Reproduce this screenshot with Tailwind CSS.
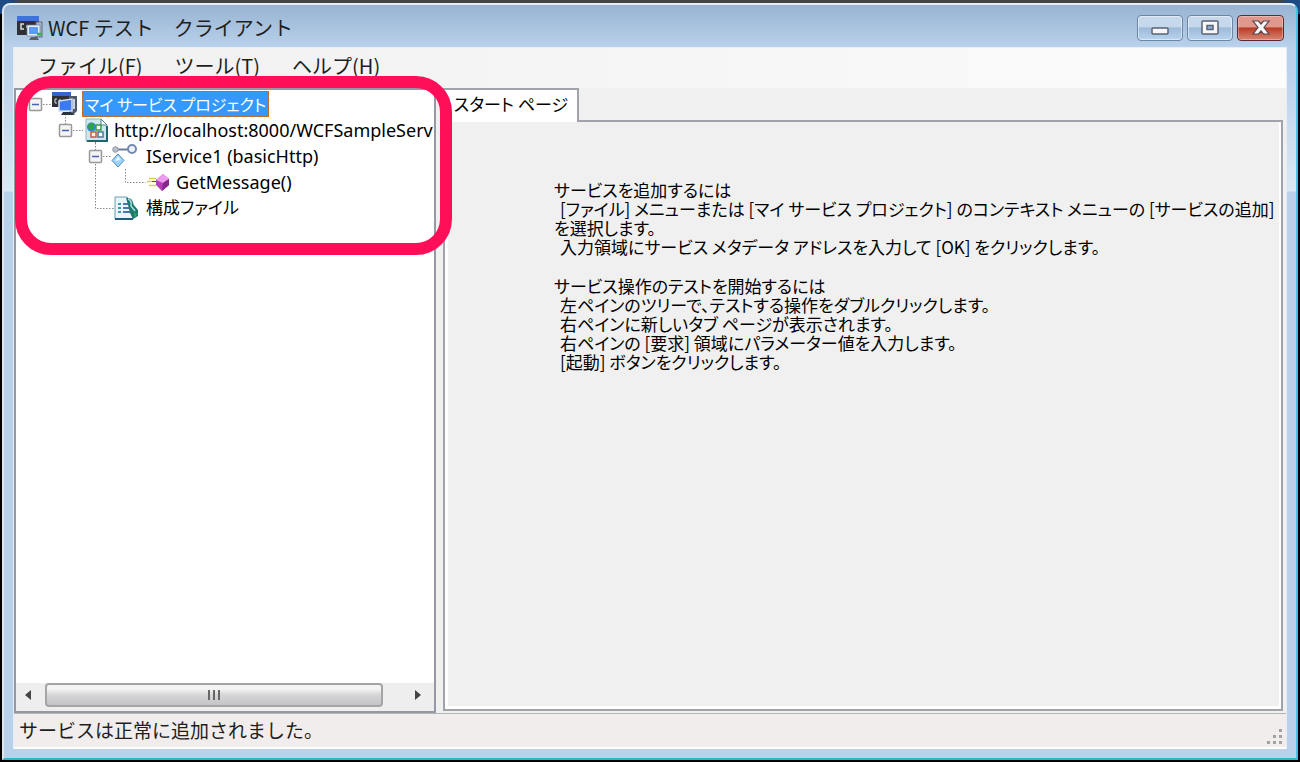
<!DOCTYPE html>
<html lang="ja">
<head>
    <meta charset="UTF-8">
    <meta name="viewport" content="width=device-width, initial-scale=1.0">
    <title>WCF テスト クライアント</title>
    <script src="https://cdn.jsdelivr.net/npm/@tailwindcss/browser@4"></script>
</head>
<body class="relative h-screen overflow-hidden bg-black font-['Noto_Sans_CJK_JP',sans-serif] text-[20px] text-[#1e1e1e]">
    <!-- window frame -->
    <div class="h-full bg-[linear-gradient(to_bottom,transparent_14px,#000_14px),linear-gradient(to_right,#1c4a84_12px,#444_20px,#444_calc(100%-20px),#1c4a84_calc(100%-12px))] px-[2px] pt-[3px] pb-[2px]">
        <div class="flex h-full flex-col rounded-t-lg border-2 border-t-[#e8eef5] border-r-[#3fc4dc] border-b-[#2fb4cc] border-l-[#dfe6ee] bg-[linear-gradient(to_bottom,#b9d1ea_60px,#dbe7f4_186px,#b9d1ea_187px)] px-[9px] pb-[9px]">
            <!-- title bar -->
            <header class="-mx-[9px] flex h-[42px] shrink-0 items-center rounded-t-md bg-linear-to-b from-[#98b4d2] to-[#b9d1ea] px-3 pt-1">
                <svg class="mr-1 h-7 w-7" viewBox="0 0 28 28">
                    <rect x="1" y="2" width="22" height="19" fill="#2e3238"/>
                    <rect x="1" y="2" width="22" height="5" fill="#3f73d6"/>
                    <path d="M8 10H5v5h3M11 11v3" stroke="#ddd" stroke-width="1.5" fill="none"/>
                    <rect x="20" y="8" width="6" height="15" fill="#a9b7c8" stroke="#5c6a7c"/>
                    <rect x="12" y="12" width="11" height="9" fill="#5b9bf5" stroke="#e4ecf8" stroke-width="2"/>
                    <path d="M11 11h13v11H11z" fill="none" stroke="#6d7d96" stroke-width=".7"/>
                    <path d="M15 23h6l2 3H13z" fill="#556070"/>
                    <path d="M21 20h5" stroke="#35b04a" stroke-width="2.500"/>
                </svg>
                <h1 class="flex-1">WCF テスト　クライアント</h1>
                <div class="flex gap-1">
                    <button aria-label="最小化" class="flex h-[26px] w-[46px] items-center justify-center rounded border border-[#6c86a5] bg-linear-to-b from-[#c6d9ec] from-45% via-[#9dbad9] via-50% to-[#b8d3ee] inset-ring inset-ring-white/50">
                        <svg width="20" height="16" viewBox="0 0 20 16"><rect x="2" y="8" width="16" height="6" rx="1" fill="#f6f6f6" stroke="#596373" stroke-width="1.5"/></svg>
                    </button>
                    <button aria-label="最大化" class="flex h-[26px] w-[46px] items-center justify-center rounded border border-[#6c86a5] bg-linear-to-b from-[#c6d9ec] from-45% via-[#9dbad9] via-50% to-[#b8d3ee] inset-ring inset-ring-white/50">
                        <svg width="20" height="16" viewBox="0 0 20 16"><rect x="2" y="1" width="16" height="13" rx="1" fill="#f6f6f6" stroke="#596373" stroke-width="1.5"/><rect x="7" y="5.500" width="6" height="4" fill="#8fb0d6" stroke="#596373" stroke-width="1.5"/></svg>
                    </button>
                    <button aria-label="閉じる" class="flex h-[26px] w-[47px] items-center justify-center rounded border border-[#5d2a34] bg-linear-to-b from-[#e0988c] from-45% via-[#b83a24] via-50% to-[#d98570] inset-ring inset-ring-white/30">
                        <svg width="20" height="16" viewBox="0 0 20 16"><path d="M2 1h5.500l2.500 3 2.500-3H18l-5 6.500 5 6.500h-5.500L10 11l-2.500 3H2l5-6.500z" fill="#f6f6f6" stroke="#59464c" stroke-width="1.2"/></svg>
                    </button>
                </div>
            </header>
            <!-- client area -->
            <main class="flex min-h-0 flex-1 flex-col border-x border-t border-[#e6eef8] bg-[#f0f0f0]">
                <nav class="flex h-10 shrink-0 items-center gap-8 bg-linear-to-r from-[#f0f0f0] to-[#fcfcfc] pb-1 pl-6">
                    <button>ファイル(F)</button>
                    <button>ツール(T)</button>
                    <button>ヘルプ(H)</button>
                </nav>
                <div class="flex min-h-0 flex-1 gap-[7px]">
                    <!-- service tree -->
                    <section class="flex w-[422px] shrink-0 flex-col border-2 border-[#9699a3] bg-white">
                        <ul class="min-h-0 flex-1 overflow-hidden pt-px font-['Noto_Sans','Noto_Sans_CJK_JP',sans-serif] text-[18px] leading-[26px] whitespace-nowrap text-black">
                            <li class="flex h-[26px] items-center">
                                <svg class="h-[26px] w-[66px] shrink-0" viewBox="0 0 66 26">
                                    <path d="M27 13.500h8M49.500 23v3" stroke="#888" stroke-dasharray="1.500 1.500"/>
                                    <rect x="13.500" y="7.500" width="12" height="12" rx="1" fill="#f4f4f4" stroke="#999" stroke-width="1.5"/>
                                    <path d="M16 13.500h7" stroke="#4a63b0" stroke-width="1.5"/>
                                    <rect x="36" y="1" width="19" height="15" fill="#2e3238"/>
                                    <rect x="36" y="1" width="19" height="4" fill="#2f66d0"/>
                                    <path d="M41 8h-2v4h2M44 8v3" stroke="#ddd" fill="none"/>
                                    <path d="M53 5h8v15l-3 3h-5z" fill="#4d5a6c"/>
                                    <path d="M58 8v10" stroke="#c5cfdd" stroke-width="2"/>
                                    <path d="M43 10l13-2v12H43z" fill="#3b7af0" stroke="#d5dff2" stroke-width="1.5"/>
                                    <path d="M47 21h7l5 3H45z" fill="#2c3440"/>
                                </svg>
                                <span class="border border-dotted border-[#c06a20] bg-[#3399ff] px-[2px] font-['Noto_Sans_CJK_JP',sans-serif] text-[16px] leading-6 text-white [font-feature-settings:'palt']">マイ サービス プロジェクト</span>
                            </li>
                            <li class="flex h-[26px] items-center">
                                <svg class="h-[26px] w-[98px] shrink-0" viewBox="0 0 98 26">
                                    <path d="M49.500 0v7M57 13.500h10M79.500 25v1" stroke="#888" stroke-dasharray="1.500 1.500"/>
                                    <rect x="43.500" y="7.500" width="12" height="12" rx="1" fill="#f4f4f4" stroke="#999" stroke-width="1.5"/>
                                    <path d="M46 13.500h7" stroke="#4a63b0" stroke-width="1.5"/>
                                    <path d="M70 2h15l6 6v16H70z" fill="#cfe6f0" stroke="#8fb8c2"/>
                                    <path d="M85 2v6h6z" fill="#fff" stroke="#5b7f8c"/>
                                    <path d="M91 9v15H71" stroke="#1f6570" stroke-width="2" fill="none"/>
                                    <circle cx="75.500" cy="10" r="4.500" fill="#2f86c8"/>
                                    <path d="M72 8q3-4 6-1l-1 5q-3 2-5-1z" fill="#35a04a"/>
                                    <rect x="80" y="8" width="5" height="5" fill="#f4fbf4" stroke="#3a9a4c" stroke-width="1.5"/>
                                    <rect x="75" y="15" width="5" height="5" fill="#fbf4f0" stroke="#c0603c" stroke-width="1.5"/>
                                    <rect x="82" y="15" width="5" height="5" fill="#fff" stroke="#4e7a94" stroke-width="1.5"/>
                                </svg>
                                <span>http://localhost:8000/WCFSampleServ</span>
                            </li>
                            <li class="flex h-[26px] items-center">
                                <svg class="h-[26px] w-[130px] shrink-0" viewBox="0 0 130 26">
                                    <path d="M79.500 0v7M79.500 21v5M87 13.500h9" stroke="#888" stroke-dasharray="1.500 1.500"/>
                                    <rect x="73.500" y="7.500" width="12" height="12" rx="1" fill="#f4f4f4" stroke="#999" stroke-width="1.5"/>
                                    <path d="M76 13.500h7" stroke="#4a63b0" stroke-width="1.5"/>
                                    <path d="M101 6.500h11" stroke="#6b7c9c" stroke-width="2"/>
                                    <circle cx="99.500" cy="6.500" r="2.800" fill="#b9bec8" stroke="#8f97a6"/>
                                    <circle cx="116" cy="6" r="4" fill="#eef2fa" stroke="#7288ae" stroke-width="2"/>
                                    <path d="M102 11l6 6.500-6 6.500-6-6.500z" fill="#9fd2f8" stroke="#4a8ccc"/>
                                    <path d="M102 13l3 4-6 1z" fill="#e4f5ff"/>
                                </svg>
                                <span>IService1 (basicHttp)</span>
                            </li>
                            <li class="flex h-[26px] items-center">
                                <svg class="h-[26px] w-[160px] shrink-0" viewBox="0 0 160 26">
                                    <path d="M79.500 0v26M109.500 0v13.500h20" stroke="#888" stroke-dasharray="1.500 1.500" fill="none"/>
                                    <path d="M133 9.500h7M131 12.500h8M133 16.500h7" stroke="#d8cc60" stroke-width="1.5"/>
                                    <path d="M136 12.500h4" stroke="#555"/>
                                    <path d="M147 5l6 5v6l-7 6-6-6v-5z" fill="#b63cb8"/>
                                    <path d="M147 5l6 5-6 4-7-3z" fill="#ee9cf0"/>
                                    <path d="M153 10v6l-7 6 1-8z" fill="#85268c"/>
                                </svg>
                                <span>GetMessage()</span>
                            </li>
                            <li class="flex h-[26px] items-center">
                                <svg class="h-[26px] w-[130px] shrink-0" viewBox="0 0 130 26">
                                    <path d="M79.500 0v13.500h18" stroke="#888" stroke-dasharray="1.500 1.500" fill="none"/>
                                    <path d="M99 2h12l6 6v16H99z" fill="#eaf4fa" stroke="#6d9cae"/>
                                    <path d="M99 24h18" stroke="#1d5e7c" stroke-width="2"/>
                                    <path d="M102 9h3M102 13h3M102 17h3" stroke="#3c9aa8" stroke-width="2"/>
                                    <path d="M107 9h5M107 13h6M107 17h7" stroke="#4a78b4" stroke-width="2"/>
                                    <path d="M110 3q7-1 7 6l5 6v6l-5 3-3-6-2-8z" fill="#1f7a6c"/>
                                    <path d="M112 4q4 1 3 7l4 5" stroke="#a8d8e8" stroke-width="1.5" fill="none"/>
                                    <path d="M118 18l3 1-2 3z" fill="#35b04a"/>
                                </svg>
                                <span class="text-[17px] [font-feature-settings:'palt']">構成ファイル</span>
                            </li>
                        </ul>
                        <div class="flex h-7 shrink-0 items-center bg-[#eeeeee] px-[3px] pb-1">
                            <button aria-label="左へスクロール" class="flex h-full w-[26px] items-center pl-[5px]"><svg width="8" height="12" viewBox="0 0 8 12"><path d="M7 1v10L1 6z" fill="#444"/></svg></button>
                            <div class="flex h-6 flex-1 pr-[22px]">
                                <div class="flex flex-1 items-center justify-center gap-[3px] rounded-sm border-2 border-[#a5a5a5] bg-linear-to-b from-[#f4f4f4] from-20% via-[#d6d6d8] via-50% to-[#c4c4c8]">
                                    <i class="h-[10px] w-[2px] bg-[#666]"></i>
                                    <i class="h-[10px] w-[2px] bg-[#666]"></i>
                                    <i class="h-[10px] w-[2px] bg-[#666]"></i>
                                </div>
                            </div>
                            <button aria-label="右へスクロール" class="flex h-full w-[26px] items-center justify-center"><svg width="8" height="12" viewBox="0 0 8 12"><path d="M1 1v10l6-5z" fill="#444"/></svg></button>
                        </div>
                    </section>
                    <!-- tab area -->
                    <section class="flex min-w-0 flex-1 flex-col pr-[3px] pb-[2px] text-[17px] text-black [font-feature-settings:'palt']">
                        <div class="flex h-[34px] shrink-0">
                            <button class="flex w-[136px] items-center justify-center border-2 border-b-0 border-[#a0a2ac] bg-white pb-1">スタート ページ</button>
                            <div class="flex-1 border-b-2 border-[#a0a2ac]"></div>
                        </div>
                        <div class="min-h-0 flex-1 border-2 border-t-0 border-[#a0a2ac] bg-white pr-[2px] pb-[3px] pl-[3px]">
                            <div class="h-full bg-[#f0f0f0] pt-[58px] pl-[106px] leading-[19px] whitespace-nowrap">
                                <p>サービスを追加するには</p>
                                <p class="pl-[6px]">[ファイル] メニューまたは [マイ サービス プロジェクト] のコンテキスト メニューの [サービスの追加]</p>
                                <p>を選択します。</p>
                                <p class="pl-[6px]">入力領域にサービス メタデータ アドレスを入力して [OK] をクリックします。</p>
                                <p class="pt-5">サービス操作のテストを開始するには</p>
                                <p class="pl-[6px]">左ペインのツリーで、テストする操作をダブルクリックします。</p>
                                <p class="pl-[6px]">右ペインに新しいタブ ページが表示されます。</p>
                                <p class="pl-[6px]">右ペインの [要求] 領域にパラメーター値を入力します。</p>
                                <p class="pl-[6px]">[起動] ボタンをクリックします。</p>
                            </div>
                        </div>
                    </section>
                </div>
                <!-- status bar -->
                <footer class="flex h-9 shrink-0 items-center justify-between border-t border-b-2 border-t-[#b4b4b4] border-b-white bg-[#f1edec] pr-[2px] pl-[5px] text-[19px]">
                    <span>サービスは正常に追加されました。</span>
                    <svg class="mb-px self-end" width="18" height="18" viewBox="0 0 18 18" fill="#a2a2a2"><path d="M13 1h3v3h-3zM7 7h3v3H7zM13 7h3v3h-3zM1 13h3v3H1zM7 13h3v3H7zM13 13h3v3h-3z"/></svg>
                </footer>
            </main>
        </div>
    </div>
    <!-- highlight -->
    <div class="pointer-events-none absolute top-[76px] left-[15px] h-[179px] w-[437px] rounded-[36px] border-[12px] border-[#ff0f57]"></div>
</body>
</html>
